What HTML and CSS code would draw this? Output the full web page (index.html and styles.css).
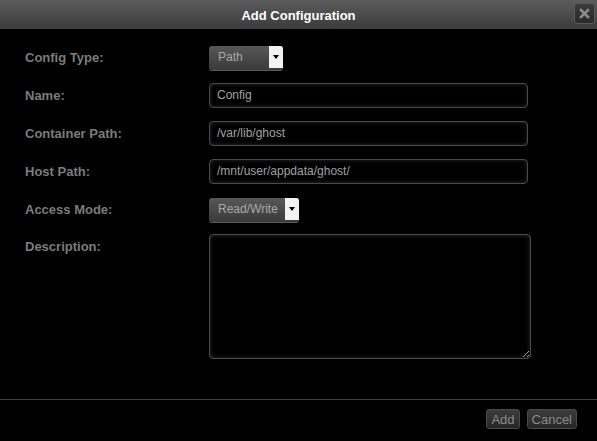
FILE: index.html
```html
<!DOCTYPE html>
<html lang="en">
<head>
    <meta charset="UTF-8">
    <meta name="viewport" content="width=device-width, initial-scale=1.0">
    <title>Add Configuration</title>
    <link rel="stylesheet" href="styles.css">
</head>
<body>
    <div class="dialog">
        <div class="titlebar">
            <span class="title">Add Configuration</span>
            <button class="close" title="Close">
                <svg width="11" height="11" viewBox="0 0 11 11">
                    <path d="M2 2 L9 9 M9 2 L2 9" stroke="#8c8c8c" stroke-width="2.6" stroke-linecap="square"/>
                </svg>
            </button>
        </div>

        <div class="form">
            <div class="row">
                <label>Config Type:</label>
                <div class="select select-path">
                    <span class="select-value">Path</span>
                    <span class="select-arrow"></span>
                </div>
            </div>
            <div class="row">
                <label>Name:</label>
                <input type="text" class="field" value="Config">
            </div>
            <div class="row">
                <label>Container Path:</label>
                <input type="text" class="field" value="/var/lib/ghost">
            </div>
            <div class="row">
                <label>Host Path:</label>
                <input type="text" class="field" value="/mnt/user/appdata/ghost/">
            </div>
            <div class="row">
                <label>Access Mode:</label>
                <div class="select select-mode">
                    <span class="select-value">Read/Write</span>
                    <span class="select-arrow"></span>
                </div>
            </div>
            <div class="row row-top">
                <label>Description:</label>
                <textarea class="description"></textarea>
            </div>
        </div>

        <div class="footer">
            <button class="btn">Add</button>
            <button class="btn">Cancel</button>
        </div>
    </div>
</body>
</html>
```

FILE: styles.css
```css
body {
    margin: 0;
    background-color: #000;
    font-family: "Liberation Sans", Arial, sans-serif;
}
.dialog {
    width: 597px;
    height: 441px;
    background: #000;
}
.titlebar {
    position: relative;
    height: 29px;
    display: flex;
    align-items: center;
    justify-content: center;
    background: linear-gradient(#5c5c5c, #3b3b3b);
}
.title {
    color: #fff;
    font-size: 13px;
    font-weight: bold;
    padding-top: 1px;
}
.close {
    position: absolute;
    right: 2px;
    top: 3px;
    width: 21px;
    height: 21px;
    padding: 0;
    display: flex;
    align-items: center;
    justify-content: center;
    background: linear-gradient(#3a3a3a, #2a2a2a);
    border: 1px solid #5a5a5a;
    border-radius: 3px;
}
.form {
    padding: 9px 0 0 25px;
}
.row {
    display: flex;
    align-items: center;
    height: 38px;
}
.row label {
    width: 184px;
    flex: none;
    color: #7c7c7c;
    font-size: 13px;
    font-weight: bold;
}
.row-top {
    align-items: flex-start;
    height: auto;
}
.row-top label {
    margin-top: 11px;
}
.field {
    box-sizing: border-box;
    width: 319px;
    height: 25px;
    margin: 0;
    padding: 0 7px;
    background: #000;
    border: 1px solid #4a4a4a;
    border-radius: 4px;
    box-shadow: inset 0 0 4px rgba(255, 255, 255, 0.18);
    color: #a0a0a0;
    font-family: "Liberation Sans", Arial, sans-serif;
    font-size: 12px;
    outline: none;
}
.select {
    box-sizing: border-box;
    display: flex;
    height: 24px;
    margin-top: 1px;
    border-radius: 3px;
    background: linear-gradient(#575757, #3a3a3a);
    box-shadow: 0 1px 0 #5a5a5a;
}
.select-path {
    width: 74px;
}
.select-mode {
    width: 90px;
}
.select-value {
    flex: 1;
    padding-left: 9px;
    line-height: 23px;
    color: #a8a8a8;
    font-size: 12px;
}
.select-arrow {
    position: relative;
    width: 14px;
    height: 22px;
    background: #f2f2f2;
    border-radius: 0 3px 0 0;
}
.select-arrow::after {
    content: "";
    position: absolute;
    left: 4px;
    top: 9px;
    border-left: 3px solid transparent;
    border-right: 3px solid transparent;
    border-top: 4px solid #000;
}
.description {
    box-sizing: border-box;
    width: 322px;
    height: 125px;
    margin: 6px 0 0 0;
    background: #000;
    border: 1px solid #4a4a4a;
    border-radius: 4px;
    box-shadow: inset 0 0 5px rgba(255, 255, 255, 0.18);
    color: #a0a0a0;
    outline: none;
}
.footer {
    margin-top: 40px;
    border-top: 1px solid #3e3e3e;
    display: flex;
    justify-content: flex-end;
    gap: 7px;
    padding: 9px 20px 0 0;
}
.btn {
    height: 20px;
    padding: 0 4px;
    background: linear-gradient(#3c3c3c, #262626);
    border: 1px solid #4a4a4a;
    border-radius: 3px;
    color: #8c8c8c;
    font-family: "Liberation Sans", Arial, sans-serif;
    font-size: 13px;
}
```
